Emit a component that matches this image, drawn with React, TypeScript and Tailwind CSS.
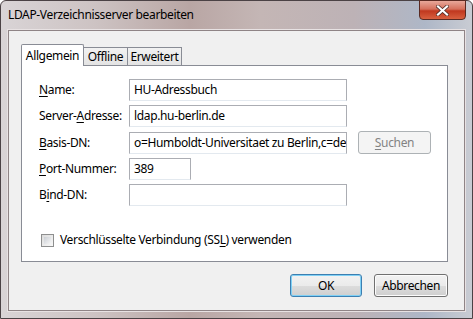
import React from "react";

const font = { fontFamily: '"Noto Sans", "Segoe UI", sans-serif' };

function Key({ children }: { children: React.ReactNode }) {
  return <span className="underline underline-offset-2">{children}</span>;
}

function Field({ label, value, width = "w-[218px]" }: { label: React.ReactNode; value?: string; width?: string }) {
  return (
    <div className="flex items-center h-[22px]">
      <div className="w-[90px] shrink-0">{label}</div>
      <div className={`${width} h-[22px] bg-white border border-[#abadb3] border-b-[#e3e9ef] flex items-center px-[4px] overflow-hidden whitespace-nowrap`}>
        {value}
      </div>
    </div>
  );
}

export default function App() {
  return (
    <div
      className="w-[473px] h-[319px] flex flex-col text-[12px] tracking-[-0.35px] text-black rounded-t-[6px] border border-[#4b4245] bg-[linear-gradient(90deg,#d9d4d6_0%,#cdc3c3_20%,#b9a6a4_40%,#c4b6b5_55%,#bdb2b6_75%,#aeb7c7_90%,#c9ccd3_100%)]"
      style={font}
    >
      {/* title bar */}
      <div className="h-[29px] flex items-start relative">
        <span className="pl-[7px] pt-[5px] text-[12px]">LDAP-Verzeichnisserver bearbeiten</span>
        <div className="absolute right-[6px] top-[-1px] w-[47px] h-[20px] rounded-b-[4px] border border-[#5a2a22] bg-[linear-gradient(180deg,#e8a89a_0%,#d5705c_45%,#c0381f_55%,#d8603f_100%)] flex items-center justify-center">
          <svg width="13" height="11" viewBox="0 0 13 11">
            <path d="M2 1.5 L11 9.5 M11 1.5 L2 9.5" stroke="#4a2a25" strokeWidth="3.6" strokeLinecap="square" />
            <path d="M2 1.5 L11 9.5 M11 1.5 L2 9.5" stroke="#ffffff" strokeWidth="2.2" strokeLinecap="square" />
          </svg>
        </div>
      </div>

      {/* client area */}
      <div className="flex-1 mx-[7px] mb-[7px] border border-[#8f8486] shadow-[0_0_0_1px_#e8e2e3] bg-[#f0f0f0] flex flex-col pl-[12px] pr-[16px] pt-[12px]">
        {/* tabs */}
        <div className="flex items-end h-[22px]">
          <div className="h-[22px] w-[63px] bg-white border border-[#898c95] border-b-0 rounded-t-[2px] flex items-center justify-center relative top-[1px] z-10">
            Allgemein
          </div>
          <div className="h-[18px] w-[44px] bg-[linear-gradient(180deg,#f2f2f2,#e3e3e3)] border border-[#898c95] border-b-0 border-l-0 flex items-center justify-center">
            Offline
          </div>
          <div className="h-[18px] w-[54px] bg-[linear-gradient(180deg,#f2f2f2,#e3e3e3)] border border-[#898c95] border-b-0 border-l-0 flex items-center justify-center">
            Erweitert
          </div>
        </div>

        {/* panel */}
        <div className="h-[197px] bg-white border border-[#898c95] flex flex-col pl-[17px] pt-[13px]">
          <div className="flex flex-col gap-[4px]">
            <Field label={<><Key>N</Key>ame:</>} value="HU-Adressbuch" />
            <Field label={<>Server-<Key>A</Key>dresse:</>} value="ldap.hu-berlin.de" />
            <div className="flex items-center gap-[11px]">
              <Field label={<><Key>B</Key>asis-DN:</>} value="o=Humboldt-Universitaet zu Berlin,c=de" />
              <div className="w-[73px] h-[23px] rounded-[3px] border border-[#adb2b5] bg-[#f4f4f4] text-[#838383] flex items-center justify-center">
                <span><Key>S</Key>uchen</span>
              </div>
            </div>
            <Field label={<><Key>P</Key>ort-Nummer:</>} value="389" width="w-[62px]" />
            <Field label={<>B<Key>i</Key>nd-DN:</>} />
          </div>
          <div className="flex items-center gap-[6px] mt-[25px] ml-[2px]">
            <div className="w-[13px] h-[13px] border border-[#8e8f8f] bg-[linear-gradient(135deg,#dcdcdc,#f8f8f8)] p-[2px]">
              <div className="w-full h-full bg-[linear-gradient(135deg,#cbcfd5,#f6f6f6)]" />
            </div>
            <span>
              Verschlüsselte Verbindung (SS<Key>L</Key>) verwenden
            </span>
          </div>
        </div>

        {/* buttons */}
        <div className="flex justify-end gap-[12px] mt-[12px]">
          <div className="w-[72px] h-[23px] rounded-[3px] border border-[#3c7fb1] shadow-[inset_0_0_0_1px_#7fd0f5] bg-[linear-gradient(180deg,#f2f2f2_0%,#ebebeb_50%,#dddddd_50%,#cfcfcf_100%)] flex items-center justify-center">
            OK
          </div>
          <div className="w-[74px] h-[23px] rounded-[3px] border border-[#707070] shadow-[inset_0_0_0_1px_#fcfcfc] bg-[linear-gradient(180deg,#f2f2f2_0%,#ebebeb_50%,#dddddd_50%,#cfcfcf_100%)] flex items-center justify-center">
            Abbrechen
          </div>
        </div>
      </div>
    </div>
  );
}
